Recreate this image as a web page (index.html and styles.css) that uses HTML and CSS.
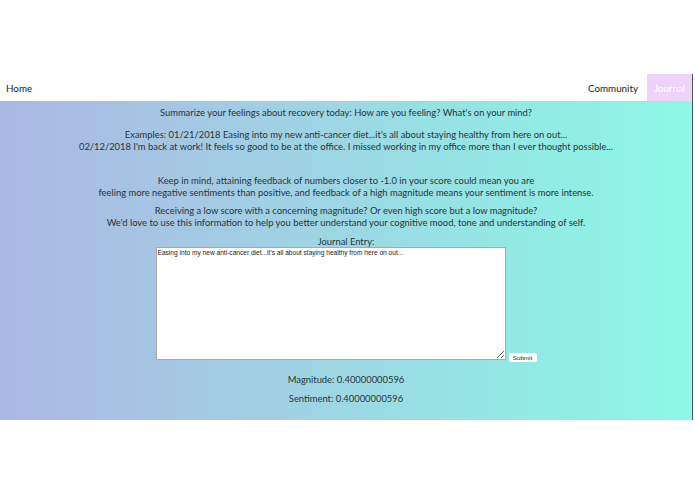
FILE: index.html
```html
<!DOCTYPE html>
<html>
<head>
<meta charset="utf-8">
<link rel="stylesheet" href="styles.css">
</head>
<body>
<div class="page">
  <nav class="nav">
    <a class="nav-link home">Home</a>
    <div class="nav-right">
      <a class="nav-link">Community</a>
      <a class="nav-link active">Journal</a>
    </div>
  </nav>
  <main class="main">
    <p class="intro">Summarize your feelings about recovery today: How are you feeling? What's on your mind?</p>
    <p class="examples">Examples: 01/21/2018 Easing into my new anti-cancer diet...it's all about staying healthy from here on out...<br>02/12/2018 I'm back at work! It feels so good to be at the office. I missed working in my office more than I ever thought possible...</p>
    <p class="keep">Keep in mind, attaining feedback of numbers closer to -1.0 in your score could mean you are<br>feeling more negative sentiments than positive, and feedback of a high magnitude means your sentiment is more intense.</p>
    <p class="receiving">Receiving a low score with a concerning magnitude? Or even high score but a low magnitude?<br>We'd love to use this information to help you better understand your cognitive mood, tone and understanding of self.</p>
    <form class="entry">
      <label class="entry-label">Journal Entry:</label>
      <div class="entry-row">
        <textarea class="entry-text">Easing into my new anti-cancer diet...it's all about staying healthy from here on out...</textarea>
        <button class="submit" type="button">Submit</button>
      </div>
    </form>
    <p class="score first">Magnitude: 0.40000000596</p>
    <p class="score second">Sentiment: 0.40000000596</p>
  </main>
</div>
</body>
</html>
```
FILE: styles.css
```css
html, body {
  margin: 0;
  padding: 0;
  background: #ffffff;
}
body {
  font-family: "Lato", "Noto Sans", sans-serif;
  color: #2a3438;
}
.page {
  margin-top: 74px;
  width: 692px;
  border-right: 1px solid #4a5a5c;
}
.nav {
  display: flex;
  justify-content: space-between;
  align-items: stretch;
  height: 27px;
  background: #ffffff;
  font-size: 9.8px;
}
.nav-right {
  display: flex;
}
.nav-link {
  display: flex;
  align-items: center;
  padding: 0 9px 0 8px;
  color: #222;
}
.home {
  padding-left: 6px;
}
.active {
  background: #efd2f8;
  color: #ffffff;
  width: 45px;
  justify-content: center;
  padding: 0;
}
.main {
  background: linear-gradient(to right, #acb7e4 0%, #a2cde3 35%, #94e6e4 70%, #8df8e6 100%);
  text-align: center;
  font-size: 9.4px;
  line-height: 12px;
  padding: 6px 0 15px;
}
.main p {
  margin: 0;
}
.intro {
  margin-bottom: 10px !important;
}
.examples {
  margin-bottom: 22px !important;
}
.keep {
  margin-bottom: 6px !important;
}
.receiving {
  margin-bottom: 8px !important;
}
.entry {
  display: flex;
  flex-direction: column;
  align-items: center;
}
.entry-label {
  font-size: 9.4px;
  line-height: 10px;
}
.entry-row {
  display: flex;
  align-items: flex-end;
}
.entry-text {
  width: 350px;
  height: 113px;
  box-sizing: border-box;
  margin: 0;
  padding: 1px 1px;
  border: 1px solid #a9a9a9;
  font-family: "Liberation Sans", sans-serif;
  font-size: 6.6px;
  line-height: 8px;
  color: #222;
  resize: both;
}
.submit {
  margin: 0 0 -2px 3px;
  width: 28px;
  height: 9px;
  padding: 0;
  background: #fff;
  border: none;
  border-radius: 2px;
  font-family: "Liberation Sans", sans-serif;
  font-size: 6.2px;
  line-height: 9px;
  color: #222;
}
.first {
  margin-top: 14px !important;
}
.second {
  margin-top: 7px !important;
}
```
